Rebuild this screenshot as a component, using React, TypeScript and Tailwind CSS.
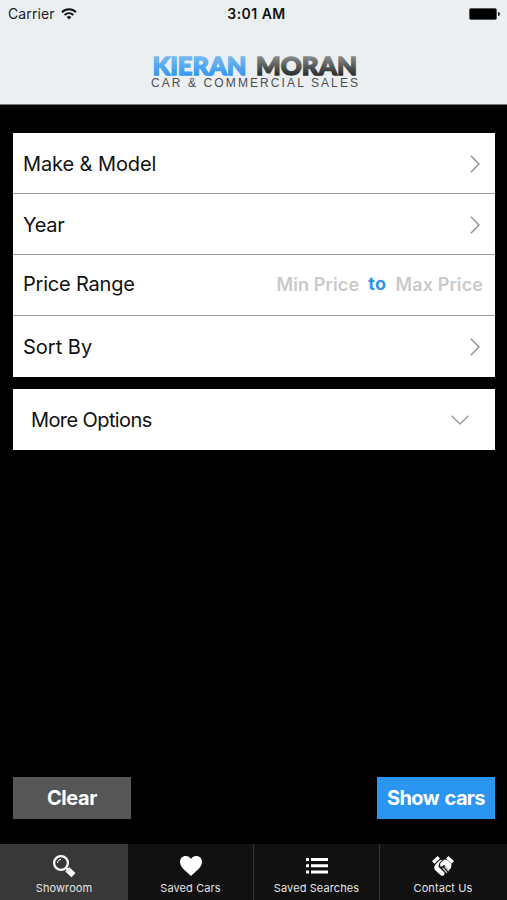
import type { ReactNode } from "react";

function Chevron({ down = false }: { down?: boolean }) {
  return down ? (
    <svg width="18" height="10" viewBox="0 0 18 10" className="block" fill="none" stroke="#9b9b9b" strokeWidth="1.4">
      <path d="M0.7 0.8 L9 9 L17.3 0.8" />
    </svg>
  ) : (
    <svg width="10" height="18" viewBox="0 0 10 18" className="block" fill="none" stroke="#8f8f8f" strokeWidth="1.4">
      <path d="M0.8 0.7 L9 9 L0.8 17.3" />
    </svg>
  );
}

function Row({ label, className, children }: { label: string; className: string; children: ReactNode }) {
  return (
    <div className={`flex items-center justify-between bg-white text-[20px] ${className}`}>
      <span className="whitespace-nowrap">{label}</span>
      {children}
    </div>
  );
}

function Tab({ label, className, children }: { label: string; className: string; children: ReactNode }) {
  return (
    <div className={`flex flex-col items-center pt-[10px] ${className}`}>
      <div className="flex h-6 items-center justify-center">{children}</div>
      <span className="mt-[3px] whitespace-nowrap text-[11px] leading-[14px] tracking-[0.1px] text-[#e4e4e4]">{label}</span>
    </div>
  );
}

export default function App() {
  return (
    <div className="flex h-[900px] w-[507px] flex-col overflow-hidden bg-black font-['Inter',sans-serif] text-[#111]">
      <header className="h-[105px] shrink-0 border-b border-[#777b7e] bg-[#ebeff2]">
        <div className="grid h-[27px] grid-cols-3 items-center pl-2 pr-[7px]">
          <div className="flex items-center gap-[6px]">
            <span className="text-[14px] tracking-[0.1px] text-[#222]">Carrier</span>
            <svg width="16" height="12" viewBox="0 0 16 12" fill="none" stroke="#111" strokeWidth="2">
              <path d="M1 4.2 C5 0.2 11 0.2 15 4.2" />
              <path d="M3.6 7 C6.2 4.6 9.8 4.6 12.4 7" />
              <path d="M5.6 8.9 Q8 6.9 10.4 8.9 L8 11.6 Z" fill="#111" stroke="none" />
            </svg>
          </div>
          <span className="pl-[5px] text-center text-[14px] font-semibold tracking-[0.45px] text-[#111]">3:01 AM</span>
          <div className="flex items-center justify-end gap-px">
            <div className="h-3 w-7 rounded-[2px] border border-[#555] bg-black" />
            <div className="h-1 w-[2px] rounded-r-full bg-[#222]" />
          </div>
        </div>
        <svg width="212" height="46" viewBox="0 -8 212 46" className="ml-[148px] mt-[17px] block">
          <defs>
            <linearGradient id="blue" x1="0" y1="0" x2="0" y2="25" gradientUnits="userSpaceOnUse">
              <stop offset="0.2" stopColor="#74b8ef" />
              <stop offset="0.9" stopColor="#369af4" />
            </linearGradient>
            <linearGradient id="gray" x1="0" y1="0" x2="0" y2="25" gradientUnits="userSpaceOnUse">
              <stop offset="0.2" stopColor="#858987" />
              <stop offset="0.9" stopColor="#2d302f" />
            </linearGradient>
          </defs>
          <g fontFamily="Lato, sans-serif" fontWeight="900" fontSize="24" strokeWidth="1.3" className="[font-kerning:none]">
            <text x="4.5" y="22.5" textLength="94" lengthAdjust="spacingAndGlyphs" fill="url(#blue)" stroke="url(#blue)">KIERAN</text>
            <text x="108" y="22.5" textLength="101" lengthAdjust="spacingAndGlyphs" fill="url(#gray)" stroke="url(#gray)">MORAN</text>
          </g>
          <text x="3" y="35.3" textLength="207" fontFamily="Liberation Sans, sans-serif" fontSize="12" fill="#4b4e50">CAR &amp; COMMERCIAL SALES</text>
        </svg>
      </header>

      <main className="flex flex-1 flex-col pb-[25px] pl-[13px] pr-3 pt-7">
        <section className="divide-y divide-[#999]">
          <Row label="Make & Model" className="h-[61px] pl-[10px] pr-[15px] pt-[2px] tracking-[-0.1px]"><Chevron /></Row>
          <Row label="Year" className="h-[61px] pl-[10px] pr-[15px] pt-px tracking-[-0.3px]"><Chevron /></Row>
          <Row label="Price Range" className="h-[61px] pb-[2px] pl-[10px] pr-3 tracking-[-0.2px]">
            <div className="flex items-center whitespace-nowrap text-[18px] font-semibold tracking-[0.1px] text-[#cacacc]">
              <span>Min Price</span>
              <span className="mx-[9px] pb-[2px] font-bold tracking-[0.5px] text-[#2e93ea]">to</span>
              <span>Max Price</span>
            </div>
          </Row>
          <Row label="Sort By" className="h-[61px] pl-[10px] pr-[15px] pt-px"><Chevron /></Row>
        </section>
        <section className="mt-3">
          <Row label="More Options" className="h-[61px] pl-[18px] pr-[26px] pt-px tracking-[-0.6px]"><Chevron down /></Row>
        </section>
        <div className="mt-auto flex justify-between text-[20px] font-bold text-white">
          <button className="h-[42px] w-[118px] bg-[#565656] tracking-[-0.4px]">Clear</button>
          <button className="h-[42px] w-[118px] whitespace-nowrap bg-[#2b96f1] tracking-[-0.65px] [word-spacing:1.5px]">Show cars</button>
        </div>
      </main>

      <nav className="grid h-14 shrink-0 grid-cols-[128px_126px_126px_127px] bg-[#111]">
        <Tab label="Showroom" className="bg-[#383838]">
          <svg width="24" height="24" viewBox="0 0 24 24" fill="none" stroke="white">
            <circle cx="9" cy="9" r="6.9" strokeWidth="2.3" />
            <path d="M5.3 9 Q5.6 5.6 9 5.3" strokeWidth="1" />
            <path d="M13.5 13.5 L16 16" strokeWidth="2.2" />
            <path d="M15.3 15.3 L21.5 21.2" strokeWidth="5.8" />
            <path d="M14.6 18.2 L18.4 14.4" stroke="#999" strokeWidth="0.7" />
          </svg>
        </Tab>
        <Tab label="Saved Cars" className="border-r border-[#363636]">
          <svg width="24" height="22" viewBox="0 0 24 22" fill="white">
            <path d="M12 21 C9 17.5 1 13 1 7 C1 3.3 3.5 1 6.6 1 C9 1 11 2.2 12 4 C13 2.2 15 1 17.4 1 C20.5 1 23 3.3 23 7 C23 13 15 17.5 12 21Z" />
          </svg>
        </Tab>
        <Tab label="Saved Searches" className="border-r border-[#363636]">
          <svg width="22" height="16" viewBox="0 0 22 16" fill="white">
            <path d="M0 0h3v3H0zM5 0h17v3H5zM0 6.3h3v3H0zM5 6.3h17v3H5zM0 12.6h3v3H0zM5 12.6h17v3H5z" />
          </svg>
        </Tab>
        <Tab label="Contact Us" className="pr-px">
          <svg width="22" height="20" viewBox="0 0 22 20" fill="white">
            <path d="M0 5.3 L5.6 0 L8 2.4 L2.5 7.8Z" />
            <path d="M16.4 0 L22 5.3 L19.5 7.8 L14 2.4Z" />
            <path d="M3.2 8.8 L7.7 4.3 L10.3 3.8 L7.3 7 L6.5 10.8 L12.8 17 L11.5 19.8 L9 19.5 L3 14 L2 11.5Z" />
            <path d="M8.2 7.5 L12 3.5 L15.5 4.2 L19.5 8 L19 12 L16.8 14.2 L12 8.7 L10 10.8 L8.2 10.2Z" />
            <path d="M10.8 12 L15 16.8 M12.8 10.5 L16.8 15" fill="none" stroke="#c8c8c8" strokeWidth="1.4" />
          </svg>
        </Tab>
      </nav>
    </div>
  );
}
